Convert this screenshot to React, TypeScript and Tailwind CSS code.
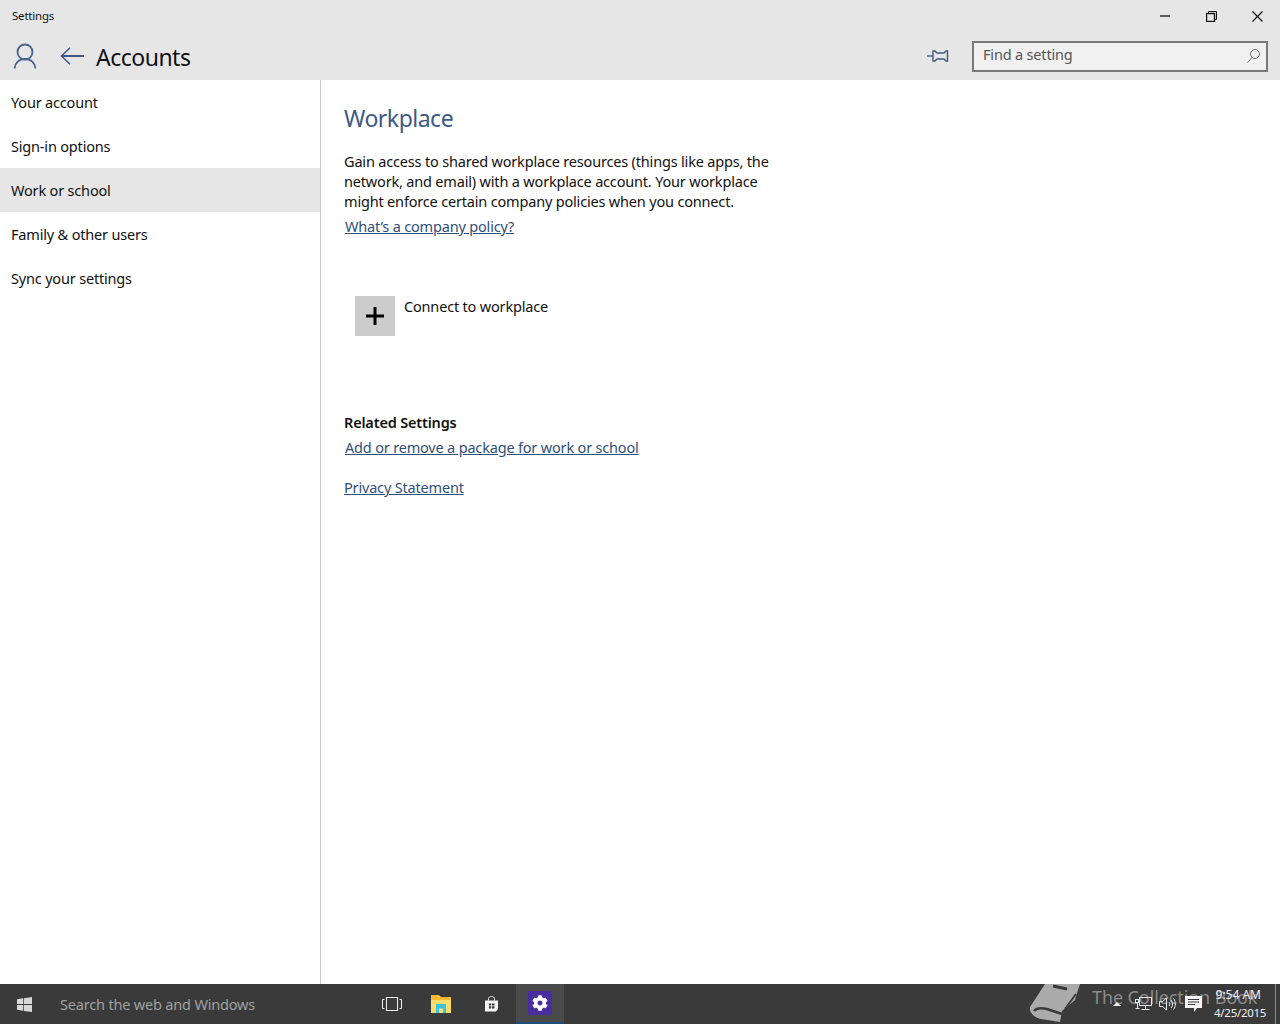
import { FaCog } from "react-icons/fa";

const navItems = [
    { label: "Your account", active: false },
    { label: "Sign-in options", active: false },
    { label: "Work or school", active: true },
    { label: "Family & other users", active: false },
    { label: "Sync your settings", active: false },
];

const font = "font-['Noto_Sans','Open_Sans',sans-serif]";
const bodyText = "text-[14.5px] tracking-[-0.18px]";

function WindowsLogo() {
    return (
        <svg width="15" height="15" viewBox="0 0 16 16" fill="#d8d8d8">
            <path d="M0 2.300 6.600 1.300V7.500H0Z" />
            <path d="M7.400 1.200 16 0V7.500H7.400Z" />
            <path d="M0 8.400H6.600V14.700L0 13.700Z" />
            <path d="M7.400 8.400H16V16L7.400 14.800Z" />
        </svg>
    );
}

function Pin() {
    return (
        <svg width="22" height="14" viewBox="0 0 22 14" fill="none" stroke="#3c5a85" strokeWidth="1.4">
            <path d="M0 7H6" />
            <path d="M6 2H8L10 4H17L19 2H20.500V12H19L17 10H10L8 12H6Z" />
        </svg>
    );
}

function UserIcon() {
    return (
        <svg width="24" height="26" viewBox="0 0 24 26" fill="none" stroke="#46638c" strokeWidth="1.800">
            <circle cx="12" cy="9" r="7.500" />
            <path d="M1.500 25.500C2 20 6 16 12 16S22 20 22.500 25.500" />
        </svg>
    );
}

function BackArrow() {
    return (
        <svg width="24" height="18" viewBox="0 0 24 18" fill="none" stroke="#3c5a85" strokeWidth="2">
            <path d="M1.500 9H24" />
            <path d="M10 0.700 1.500 9 10 17.300" strokeWidth="1.500" />
        </svg>
    );
}

function MinimizeIcon() {
    return (
        <svg width="10" height="2" viewBox="0 0 10 2">
            <path d="M0 1H10" stroke="#111" strokeWidth="1.300" />
        </svg>
    );
}

function RestoreIcon() {
    return (
        <svg width="11" height="11" viewBox="0 0 11 11" fill="none" stroke="#111" strokeWidth="1">
            <rect x="0.500" y="2.500" width="8" height="8" strokeWidth="1.400" />
            <path d="M2.500 2.500V0.500H10.500V8.500H8.500" />
        </svg>
    );
}

function CloseIcon() {
    return (
        <svg width="11" height="11" viewBox="0 0 11 11" stroke="#111" strokeWidth="1.300">
            <path d="M0.500 0.500 10.500 10.500M10.500 0.500 0.500 10.500" />
        </svg>
    );
}

function SearchGlyph() {
    return (
        <svg width="13" height="14" viewBox="0 0 13 14" fill="none" stroke="#6e6e6e" strokeWidth="1">
            <circle cx="8" cy="5" r="4.500" />
            <path d="M5 8.500 0.500 13.500" />
        </svg>
    );
}

function FileExplorerIcon() {
    return (
        <svg width="22" height="20" viewBox="0 0 22 20">
            <path d="M1 1H9L11 3H21V19H1Z" fill="#f5b932" />
            <path d="M1 6H21V19H1Z" fill="#fbdc6a" />
            <path d="M6 10H16V19H6Z" fill="#3bc3e6" />
            <path d="M9 14.500H13V19H9Z" fill="#f7e27a" />
        </svg>
    );
}

function StoreIcon() {
    return (
        <svg width="15" height="16" viewBox="0 0 15 16">
            <path d="M4.500 4.500V2.500C4.500 1.300 5.700 0.500 7.500 0.500S10.500 1.300 10.500 2.500V4.500" fill="none" stroke="#e8e8e8" strokeWidth="1" />
            <path d="M1 4.500H14V13L12 15.500H1Z" fill="#f4f4f4" />
            <path d="M5 7.500H7.200V9.500H5ZM8 7.500H10.500V9.500H8ZM5 10.200H7.200V12.500H5ZM8 10.200H10.500V12.500H8Z" fill="#3a3a3a" />
        </svg>
    );
}

function BookIcon() {
    return (
        <svg width="52" height="40" viewBox="0 0 52 40">
            <path d="M16 0H51L48 9 46 16 33 27 31 38 12 35C4 33 0 28 1 23Z" fill="#ababab" />
            <path d="M24 2 38 5" stroke="#3a3a3a" strokeWidth="3" fill="none" />
            <path d="M5 27C8 23 14 24 18 25L33 30" stroke="#3a3a3a" strokeWidth="2.500" fill="none" />
            <path d="M36 25 47 10" stroke="#3a3a3a" strokeWidth="2" fill="none" />
        </svg>
    );
}

function TaskViewIcon() {
    return (
        <svg width="20" height="14" viewBox="0 0 20 14" fill="none" stroke="#f0f0f0" strokeWidth="1">
            <rect x="4.500" y="0.500" width="11" height="13" />
            <path d="M2.500 2.500H0.500V11.500H2.500M17.500 2.500H19.500V11.500H17.500" />
        </svg>
    );
}

function NetworkIcon() {
    return (
        <svg width="17" height="15" viewBox="0 0 17 15" fill="none" stroke="#e8e8e8" strokeWidth="1">
            <rect x="4.500" y="0.500" width="12" height="8" />
            <rect x="0.500" y="2.500" width="3" height="3" />
            <path d="M2.500 5.500V11.500M0.500 11.500H4.500M10.500 8.500V12.500M6.500 12.500H14.500" />
        </svg>
    );
}

function VolumeIcon() {
    return (
        <svg width="17" height="14" viewBox="0 0 17 14" fill="none" stroke="#e8e8e8" strokeWidth="1">
            <path d="M0.500 4.500H3.500L7.500 1V13L3.500 9.500H0.500Z" />
            <path d="M10 5C11 6.500 11 7.500 10 9M12 3C14 5.500 14 8.500 12 11M14.500 1.500C17 5 17 9 14.500 12.500" />
        </svg>
    );
}

function ActionCenterIcon() {
    return (
        <svg width="17" height="16" viewBox="0 0 17 16">
            <path d="M0 0H17V12H12L9 16V12H0Z" fill="#f4f4f4" />
            <path d="M3 3.500H14M3 6H14M3 8.500H10" stroke="#3a3a3a" strokeWidth="1" />
        </svg>
    );
}

export default function App() {
    return (
        <div className={`flex h-[1024px] w-[1280px] flex-col overflow-hidden bg-white ${font}`}>
            {/* Barra de titulo */}
            <header className="h-20 shrink-0 bg-[#e6e6e6]">
                <div className="flex h-8 items-center justify-between">
                    <span className="pl-3 text-[11.5px] tracking-[-0.2px] text-[#111]">Settings</span>
                    <div className="flex items-center">
                        <button className="flex h-8 w-[46px] items-center justify-center">
                            <MinimizeIcon />
                        </button>
                        <button className="flex h-8 w-[46px] items-center justify-center">
                            <RestoreIcon />
                        </button>
                        <button className="flex h-8 w-[46px] items-center justify-center">
                            <CloseIcon />
                        </button>
                    </div>
                </div>
                <div className="flex h-12 items-center">
                    <div className="-mt-[1px] ml-[13px] flex">
                        <UserIcon />
                    </div>
                    <div className="ml-[23px] flex">
                        <BackArrow />
                    </div>
                    <span className="ml-[12px] mt-[2px] text-[23px] leading-8 tracking-[-0.5px] text-[#111]">Accounts</span>
                    <div className="ml-auto mr-3 flex items-center gap-[23px]">
                        <Pin />
                        <div className="flex h-[31px] w-[296px] items-center justify-between border-2 border-[#7a7a7a] bg-[#f0f0f0] pl-[9px] pr-[6px]">
                            <span className={`-mt-[2px] ${bodyText} text-[#555]`}>Find a setting</span>
                            <SearchGlyph />
                        </div>
                    </div>
                </div>
            </header>

            <div className="flex min-h-0 flex-1">
                {/* Menu lateral */}
                <nav className="w-[321px] shrink-0 border-r border-[#cccccc]">
                    {navItems.map((item) => (
                        <div
                            key={item.label}
                            className={`flex h-11 items-center pl-[11px] pt-[2px] ${bodyText} text-[#111] ${item.active ? "bg-[#e6e6e6]" : ""}`}
                        >
                            {item.label}
                        </div>
                    ))}
                </nav>

                {/* Contenido */}
                <main className="flex-1 pl-[23px] pt-[20px]">
                    <h1 className="text-[23px] leading-9 tracking-[-0.5px] text-[#3c5a85]">Workplace</h1>
                    <p className={`mt-[15px] w-[440px] ${bodyText} leading-5 text-[#111]`}>
                        Gain access to shared workplace resources (things like apps, the network, and email) with a workplace account. Your workplace might enforce certain company policies when you connect.
                    </p>
                    <a className={`mt-[5px] block pl-px ${bodyText} leading-5 text-[#2f4f7a] underline`}>What’s a company policy?</a>
                    <div className="mt-[60px] flex items-start pl-[11px]">
                        <div className="flex h-10 w-10 items-center justify-center bg-[#cccccc]">
                            <svg width="20" height="20" viewBox="0 0 20 20" stroke="#000" strokeWidth="3">
                                <path d="M10 1V19M1 10H19" />
                            </svg>
                        </div>
                        <span className={`ml-[9px] ${bodyText} leading-5 text-[#111]`}>Connect to workplace</span>
                    </div>
                    <h2 className={`mt-[76px] ${bodyText} font-semibold leading-5 text-[#111]`}>Related Settings</h2>
                    <a className={`mt-[5px] block pl-px ${bodyText} leading-5 text-[#2f4f7a] underline`}>Add or remove a package for work or school</a>
                    <a className={`mt-5 block ${bodyText} leading-5 text-[#2f4f7a] underline`}>Privacy Statement</a>
                </main>
            </div>

            {/* Barra de tareas */}
            <footer className="relative flex h-10 shrink-0 items-center bg-[#3a3a3a]">
                <div className="flex w-12 justify-center">
                    <WindowsLogo />
                </div>
                <span className={`ml-3 mt-[2px] w-[308px] ${bodyText} text-[#a0a0a0]`}>Search the web and Windows</span>
                <div className="flex h-10 w-12 items-center justify-center">
                    <TaskViewIcon />
                </div>
                <div className="flex h-10 w-[50px] items-center justify-center">
                    <FileExplorerIcon />
                </div>
                <div className="flex h-10 w-[50px] items-center justify-center">
                    <StoreIcon />
                </div>
                <div className="flex h-10 w-12 items-center justify-center border-b-2 border-[#1f4f7a] bg-[#4a4a4a]">
                    <div className="flex h-6 w-6 items-center justify-center bg-[#4a2ea0]">
                        <FaCog size={16} className="text-white" />
                    </div>
                </div>

                {/* Marca de agua sobre la barra */}
                <div className="absolute left-[1029px] top-0 flex h-10 overflow-hidden">
                    <BookIcon />
                </div>
                <span className="absolute left-[1092px] top-0 text-[18px] tracking-[-0.1px] text-[#8a8a8a]">The Collection Book</span>

                <div className="relative ml-auto flex h-10 items-center">
                    <div className="mr-[10px] h-0 w-0 border-x-[4px] border-b-[4px] border-x-transparent border-b-[#f0f0f0]" />
                    <div className="flex w-[24px] justify-center">
                        <NetworkIcon />
                    </div>
                    <div className="flex w-[24px] justify-center">
                        <VolumeIcon />
                    </div>
                    <div className="flex w-[28px] justify-center">
                        <ActionCenterIcon />
                    </div>
                    <div className="-mt-[1px] ml-[5px] mr-[14px] flex w-[54px] flex-col items-end text-[11.5px] leading-[18px] tracking-[-0.3px] text-[#f0f0f0]">
                        <span className="pr-[5px] text-[12px] tracking-[0px]">9:54 AM</span>
                        <span>4/25/2015</span>
                    </div>
                    <div className="absolute right-[4px] top-0 h-10 w-px bg-[#8a8a8a]" />
                </div>
            </footer>
        </div>
    );
}
